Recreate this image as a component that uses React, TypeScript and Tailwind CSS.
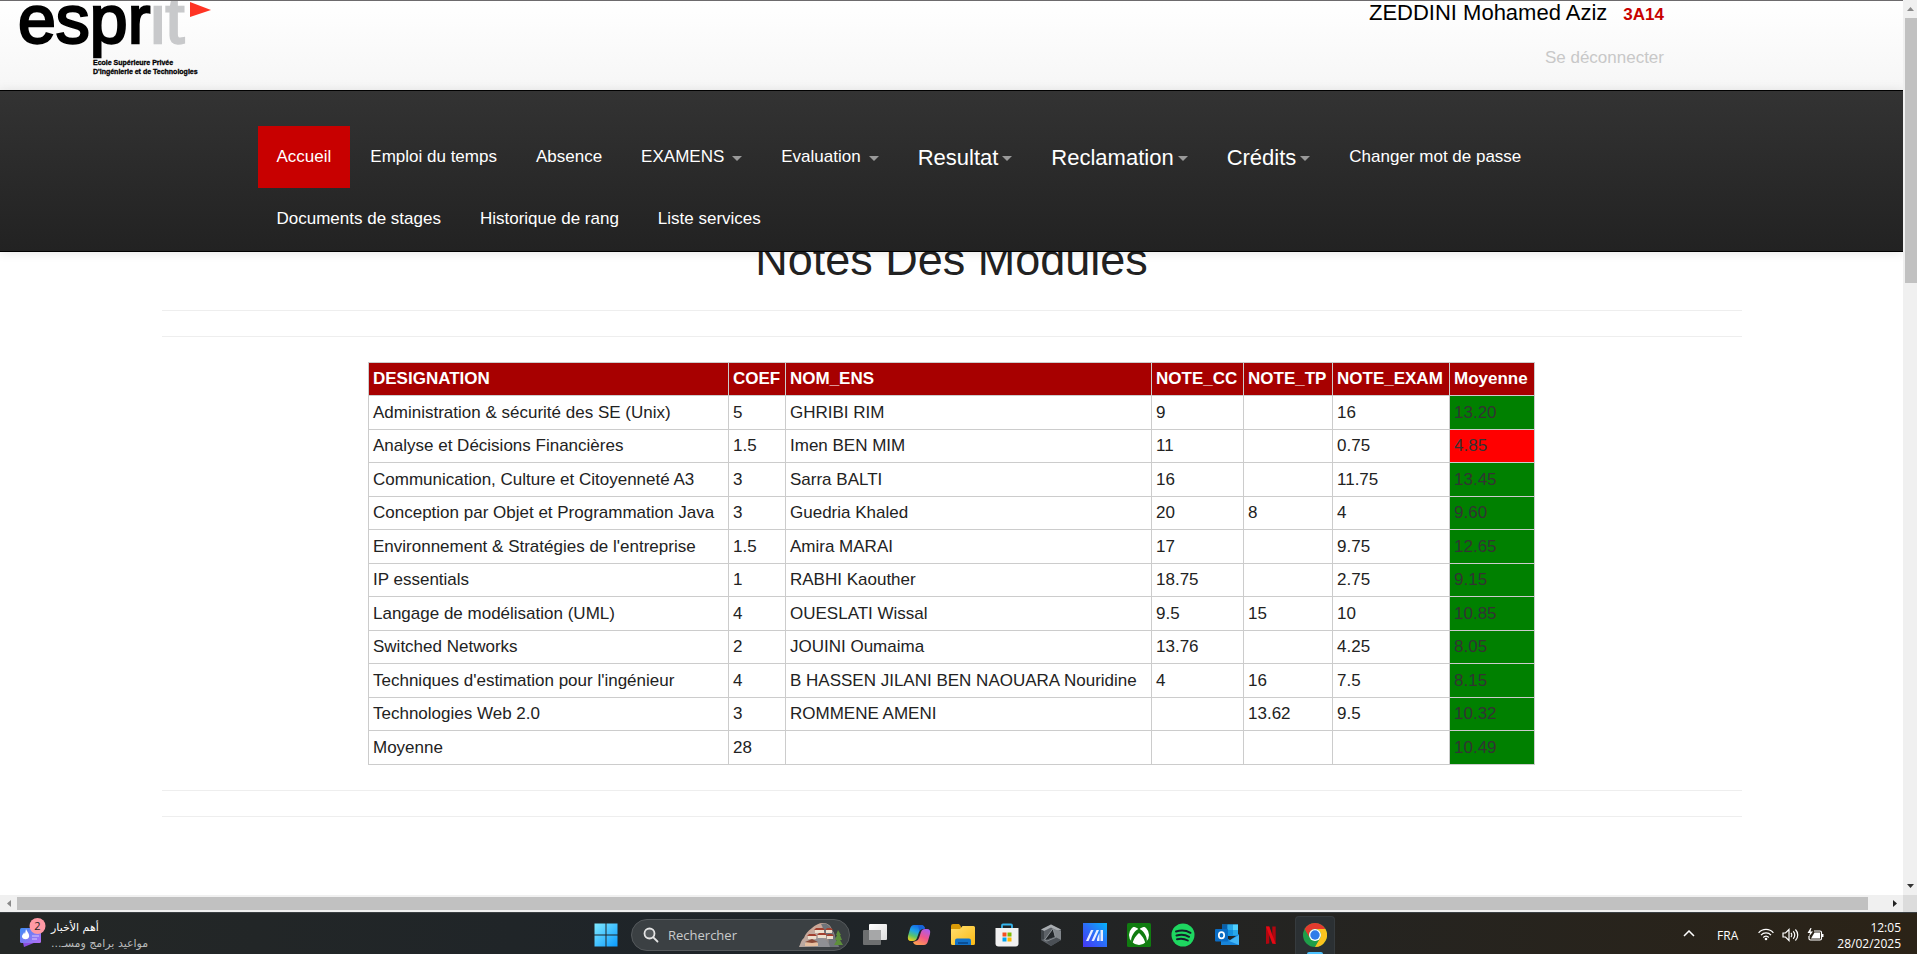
import type { ReactNode } from "react";

const ARIAL = "font-['Liberation_Sans',Arial,sans-serif]";

type NavItem = { label: string; caret?: boolean; large?: boolean; active?: boolean };

const navItems: NavItem[] = [
  { label: "Accueil", active: true },
  { label: "Emploi du temps" },
  { label: "Absence" },
  { label: "EXAMENS", caret: true },
  { label: "Evaluation", caret: true },
  { label: "Resultat", caret: true, large: true },
  { label: "Reclamation", caret: true, large: true },
  { label: "Crédits", caret: true, large: true },
  { label: "Changer mot de passe" },
  { label: "Documents de stages" },
  { label: "Historique de rang" },
  { label: "Liste services" },
];

const columns = [
  { name: "DESIGNATION", width: "w-[360px]" },
  { name: "COEF", width: "w-[57px]" },
  { name: "NOM_ENS", width: "w-[366px]" },
  { name: "NOTE_CC", width: "w-[92px]" },
  { name: "NOTE_TP", width: "w-[89px]" },
  { name: "NOTE_EXAM", width: "w-[117px]" },
  { name: "Moyenne", width: "w-[85px]" },
];

const rows: string[][] = [
  ["Administration & sécurité des SE (Unix)", "5", "GHRIBI RIM", "9", "", "16", "13.20"],
  ["Analyse et Décisions Financières", "1.5", "Imen BEN MIM", "11", "", "0.75", "4.85"],
  ["Communication, Culture et Citoyenneté A3", "3", "Sarra BALTI", "16", "", "11.75", "13.45"],
  ["Conception par Objet et Programmation Java", "3", "Guedria Khaled", "20", "8", "4", "9.60"],
  ["Environnement & Stratégies de l'entreprise", "1.5", "Amira MARAI", "17", "", "9.75", "12.65"],
  ["IP essentials", "1", "RABHI Kaouther", "18.75", "", "2.75", "9.15"],
  ["Langage de modélisation (UML)", "4", "OUESLATI Wissal", "9.5", "15", "10", "10.85"],
  ["Switched Networks", "2", "JOUINI Oumaima", "13.76", "", "4.25", "8.05"],
  ["Techniques d'estimation pour l'ingénieur", "4", "B HASSEN JILANI BEN NAOUARA Nouridine", "4", "16", "7.5", "8.15"],
  ["Technologies Web 2.0", "3", "ROMMENE AMENI", "", "13.62", "9.5", "10.32"],
  ["Moyenne", "28", "", "", "", "", "10.49"],
];

function Logo() {
  return (
    <svg width="230" height="80" viewBox="0 0 230 80" role="img" aria-label="esprit" className="block">
      <g fontFamily="'Liberation Sans', Arial, sans-serif">
        <text x="18" y="42" fontSize="68" fill="#000" stroke="#000" strokeWidth="2.4">
          espr
          <tspan fill="#c8c9cb" stroke="#c8c9cb">it</tspan>
        </text>
        <g fontSize="7" fontWeight="700" fill="#000" stroke="#000" strokeWidth="0.3">
          <text x="93" y="64">Ecole Supérieure Privée</text>
          <text x="93" y="73">D'Ingénierie et de Technologies</text>
        </g>
      </g>
      <path d="M190 1 L211 9 L190 16 Z" fill="#ff3424" />
    </svg>
  );
}

function Header() {
  return (
    <header className="border-t border-[#6d6b6d] bg-linear-to-b from-white to-[#f6f6f6]">
      <div className="flex h-[89px] items-start">
        <Logo />
        <div className="mr-[239px] ml-auto text-right">
          <div className="flex items-baseline justify-end gap-4">
            <span className="text-[22px] leading-[23px] text-black">ZEDDINI Mohamed Aziz</span>
            <span className="text-[17px] leading-[23px] font-bold text-[#c80000]">3A14</span>
          </div>
          <a href="#deconnexion" className="mt-[18px] block text-[17px] leading-7 text-[#c8c8c8]">
            Se déconnecter
          </a>
        </div>
      </div>
    </header>
  );
}

function NavBar() {
  return (
    <nav className="relative z-10 border-y border-black bg-linear-to-b from-[#333] to-[#222] pt-[35px] pb-px shadow-[0_1px_10px_rgba(0,0,0,0.1)]">
      <ul className="mx-auto flex max-w-[1388px] flex-wrap gap-x-px">
        {navItems.map((item) => (
          <li key={item.label}>
            <a
              href="#menu"
              className={`flex h-[62px] items-center px-[19px] text-white ${item.active ? "bg-[#c80000]" : ""} ${
                item.large ? "gap-1 text-[22px]" : "gap-2 text-[17px]"
              }`}
            >
              {item.label}
              {item.caret && (
                <svg width="10" height="5" viewBox="0 0 10 5" className="mt-[3px] block">
                  <path d="M0 0H10L5 5Z" fill="#999" />
                </svg>
              )}
            </a>
          </li>
        ))}
      </ul>
    </nav>
  );
}

function Rules() {
  return (
    <>
      <hr className="border-[#eee]" />
      <hr className="mt-[25px] border-[#eee]" />
    </>
  );
}

function Grades() {
  return (
    <main className="mx-auto max-w-[1580px]">
      <h1 className="-mt-[19px] mb-[23px] text-center text-[45px] leading-[54px] text-[#222]">Notes Des Modules</h1>
      <Rules />
      <table className="mx-auto my-[25px] table-fixed border-collapse text-left text-[17px] leading-6 whitespace-nowrap text-[#222]">
        <thead>
          <tr className="h-[33px] bg-[#a70000] text-white">
            {columns.map((c) => (
              <th key={c.name} scope="col" className={`border border-[#ccc] px-1 py-0 font-bold ${c.width}`}>
                {c.name}
              </th>
            ))}
          </tr>
        </thead>
        <tbody>
          {rows.map((row) => (
            <tr key={row[0]} className="h-[33px] odd:h-[34px]">
              {row.map((cell, i) => (
                <td
                  key={columns[i].name}
                  className={`border border-[#ccc] px-1 py-0 ${
                    i < 6 ? "" : Number(cell) < 8 ? "bg-[#ff0000] text-[#333]" : "bg-[#008000] text-[#333]"
                  }`}
                >
                  {cell}
                </td>
              ))}
            </tr>
          ))}
        </tbody>
      </table>
      <Rules />
    </main>
  );
}

function VerticalScroll() {
  return (
    <div className="flex w-[14px] shrink-0 flex-col bg-[#f0f0f0]">
      <button aria-label="Haut" className="flex h-[18px] items-center justify-center">
        <svg width="7" height="4" viewBox="0 0 7 4">
          <path d="M3.500 0L7 4H0Z" fill="#8a8a8a" />
        </svg>
      </button>
      <div className="ml-[2px] h-[265px] bg-[#c1c1c1]" />
      <button aria-label="Bas" className="mt-auto flex h-[18px] items-center justify-center">
        <svg width="7" height="4" viewBox="0 0 7 4">
          <path d="M0 0H7L3.500 4Z" fill="#333" />
        </svg>
      </button>
    </div>
  );
}

function HorizontalScroll() {
  return (
    <div className="flex h-[17px] shrink-0 bg-[#f0f0f0]">
      <button aria-label="Gauche" className="flex w-[17px] items-center justify-center">
        <svg width="4" height="7" viewBox="0 0 4 7">
          <path d="M4 0V7L0 3.500Z" fill="#8a8a8a" />
        </svg>
      </button>
      <div className="my-[2px] flex-1 bg-[#c1c1c1]" />
      <button aria-label="Droite" className="flex w-[35px] items-center justify-end pr-[6px]">
        <svg width="4" height="7" viewBox="0 0 4 7">
          <path d="M0 0V7L4 3.500Z" fill="#222" />
        </svg>
      </button>
      <div className="w-[14px] bg-[#dcdcdc]" />
    </div>
  );
}

function AppButton({ label, active, children }: { label: string; active?: boolean; children: ReactNode }) {
  return (
    <button
      aria-label={label}
      className={`flex h-[38px] w-11 flex-col items-center ${active ? "px-[2px]" : ""}`}
    >
      <span
        className={`flex h-[38px] w-full items-center justify-center ${
          active ? "rounded-t border border-b-0 border-[#363b3e] bg-[#2b3033]" : ""
        }`}
      >
        <svg width="24" height="24" viewBox="0 0 24 24" className="block">
          {children}
        </svg>
      </span>
      {active && <span className="-mt-[2px] h-[2px] w-4 rounded-t bg-[#4cc2ff]" />}
    </button>
  );
}

function Gradients() {
  return (
    <svg width="0" height="0" className="absolute" aria-hidden="true">
      <defs>
        <linearGradient id="win" x1="0" y1="0" x2="1" y2="1">
          <stop offset="0" stopColor="#7fe9ff" />
          <stop offset="1" stopColor="#0a9bff" />
        </linearGradient>
        <linearGradient id="white" x1="0" y1="0" x2="1" y2="1">
          <stop offset="0" stopColor="#fff" />
          <stop offset="1" stopColor="#ddd" />
        </linearGradient>
        <linearGradient id="copA" x1="0.6" y1="0" x2="0.2" y2="1">
          <stop offset="0" stopColor="#1566e8" />
          <stop offset="0.4" stopColor="#1fa5e8" />
          <stop offset="0.7" stopColor="#5bc467" />
          <stop offset="1" stopColor="#f5cf1a" />
        </linearGradient>
        <linearGradient id="copB" x1="0.8" y1="0" x2="0.3" y2="1">
          <stop offset="0" stopColor="#a95cf0" />
          <stop offset="0.5" stopColor="#f0568b" />
          <stop offset="1" stopColor="#ff9d50" />
        </linearGradient>
        <linearGradient id="folder" x1="0" y1="0" x2="1" y2="1">
          <stop offset="0" stopColor="#ffdf70" />
          <stop offset="1" stopColor="#fbb914" />
        </linearGradient>
        <linearGradient id="asus" x1="0" y1="1" x2="1" y2="0">
          <stop offset="0" stopColor="#4636f4" />
          <stop offset="0.5" stopColor="#2c6cf8" />
          <stop offset="1" stopColor="#04b4fb" />
        </linearGradient>
        <linearGradient id="news" x1="0" y1="0" x2="1" y2="1">
          <stop offset="0" stopColor="#3d8cf5" />
          <stop offset="1" stopColor="#b56cf5" />
        </linearGradient>
        <linearGradient id="rock" x1="0" y1="0" x2="1" y2="1">
          <stop offset="0" stopColor="#e3a78a" />
          <stop offset="0.5" stopColor="#b9a9a2" />
          <stop offset="1" stopColor="#5f6468" />
        </linearGradient>
      </defs>
    </svg>
  );
}

function SearchBox() {
  return (
    <label className="mx-[3px] flex h-8 w-[219px] items-center rounded-full border border-[#55595c] bg-[#3b4043] pr-[6px] pl-[11px]">
      <svg width="16" height="16" viewBox="0 0 16 16" fill="none" stroke="#e4e4e4" strokeWidth="1.800">
        <circle cx="6.500" cy="6.500" r="5" fill="#54595c" />
        <path d="M10.300 10.300L14.500 14.500" strokeLinecap="round" />
      </svg>
      <input
        type="text"
        aria-label="Rechercher"
        placeholder="Rechercher"
        className="ml-[9px] w-0 flex-1 bg-transparent pt-[2px] text-[13px] text-white outline-none placeholder:text-[#c9cbcc]"
      />
      <svg width="44" height="26" viewBox="0 0 44 26">
        <path d="M0 25C2 21 2 18 5 16C6 12 9 9 13 6C16 3 20 1 24 1C29 1 32 4 33 8C36 11 36 15 37 19L40 25Z" fill="url(#rock)" />
        <path d="M22 2C27 0 32 4 33 9C36 13 37 18 40 25H30C31 19 29 15 26 12C24 8 24 5 22 2Z" fill="#6f747a" />
        <path d="M14 20C17 16 20 15 24 16C28 18 30 21 31 25H17Z" fill="#8f9094" />
        <path d="M9 14H17V17H9ZM16 8H25V11H16ZM27 8H33V11H27ZM19 13H27V16H19ZM28 14H34V17H28Z" fill="#ecdfcd" />
        <path d="M8 14L10 12H16L18 14ZM15 8L17 6H24L26 8ZM26 8L28 6H32L34 8ZM18 13L20 11H26L28 13ZM27 14L29 12H33L35 14Z" fill="#a2402f" />
        <path d="M6 21L13 18L19 21V24H6Z" fill="#e6bf9f" />
        <path d="M6 20L13 17L19 20L13 21Z" fill="#8a4a38" />
        <path d="M39 8L42 13H41L43 18H41L44 23H35L38 18H36L38 13H37Z" fill="#5d8f3b" />
      </svg>
    </label>
  );
}

function Taskbar() {
  return (
    <footer className="grid h-[42px] shrink-0 grid-cols-[1fr_auto_1fr] overflow-hidden border-t border-[#3a3f42] bg-linear-to-r from-[#242726] via-[#1e2429] via-40% to-[#2b2317] font-['Open_Sans','Noto_Sans',sans-serif]">
      <Gradients />
      <button className="flex items-start gap-[5px] pt-1 pl-[18px] text-left">
        <svg width="28" height="32" viewBox="0 0 28 32">
          <path d="M3 17L21 12L23 23L6 30Z" fill="#8b4fe0" />
          <rect x="2" y="11" width="21" height="15" rx="1.500" fill="url(#news)" />
          <path d="M8 12C9 15 12 17 11 20C10 23 5 23 4 20C4 17 6 17 6 15L7 17Z" fill="#fff" />
          <path d="M14 19H21M14 22H19" stroke="#d9c9ff" strokeWidth="1.200" />
          <circle cx="19.500" cy="9" r="8" fill="#ff99a4" />
          <text x="19.500" y="13" fontSize="11" textAnchor="middle" fill="#222">
            2
          </text>
        </svg>
        <span dir="rtl" className="flex flex-col items-end pt-[3px] font-['DejaVu_Sans',sans-serif] text-[11px] leading-4 whitespace-nowrap">
          <span className="text-white">أهم الأخبار</span>
          <span className="text-[#b9bbbc]">مواعيد برامج ومسـ...</span>
        </span>
      </button>

      <div className="flex items-center pt-[2px] pl-1">
        <AppButton label="Démarrer">
          <path d="M0.500 0.500H11.500V11.500H0.500ZM12.500 0.500H23.500V11.500H12.500ZM0.500 12.500H11.500V23.500H0.500ZM12.500 12.500H23.500V23.500H12.500Z" fill="url(#win)" />
        </AppButton>
        <SearchBox />
        <AppButton label="Vue des tâches">
          <rect x="6" y="1" width="18" height="16" rx="1" fill="url(#white)" />
          <rect x="0" y="7" width="18" height="15" rx="1" fill="#6d6f70" />
          <rect x="6" y="7" width="12" height="10" fill="#a6a7a8" />
        </AppButton>
        <AppButton label="Copilot">
          <path d="M7 2H14Q17 2 18 5L15 6Q13 6 12 9L10 15Q9 18 6 18H4Q0 18 1 13L3 6Q4 2 7 2Z" fill="url(#copA)" />
          <path d="M17 22H10Q7 22 6 19L9 18Q11 18 12 15L14 9Q15 6 18 6H20Q24 6 23 11L21 18Q20 22 17 22Z" fill="url(#copB)" />
          <path d="M11 2H14Q17 2 18 6H16Q13 6 12.500 9Z" fill="#1763d8" />
        </AppButton>
        <AppButton label="Explorateur de fichiers">
          <path d="M0 3Q0 1 2 1H8L10 3.500V7H0Z" fill="#d99a07" />
          <path d="M0 6H9L11.500 3H22.500Q24 3 24 4.500V20.500Q24 22 22.500 22H1.500Q0 22 0 20.500Z" fill="url(#folder)" />
          <path d="M4 22V17.500Q4 15.500 6 15.500H18Q20 15.500 20 17.500V22Z" fill="#1272c8" />
          <path d="M7 20H17" stroke="#0a4f96" strokeWidth="2" />
        </AppButton>
        <AppButton label="Microsoft Store">
          <path d="M7 7V2.500Q7 1.500 8 1.500H16Q17 1.500 17 2.500V7" fill="none" stroke="#36b5ee" strokeWidth="1.800" />
          <path d="M0.500 5H23.500V20.500Q23.500 23.500 20.500 23.500H3.500Q0.500 23.500 0.500 20.500Z" fill="#f1f1f1" />
          <path d="M7.500 9.500H11.500V13.500H7.500Z" fill="#f25022" />
          <path d="M12.500 9.500H16.500V13.500H12.500Z" fill="#7fba00" />
          <path d="M7.500 14.500H11.500V18.500H7.500Z" fill="#00a4ef" />
          <path d="M12.500 14.500H16.500V18.500H12.500Z" fill="#ffb900" />
        </AppButton>
        <AppButton label="Armoury Crate">
          <path d="M12 1.500L22 6.500V17L12 23L2 17V6.500Z" fill="#5d6268" />
          <path d="M12 1.500L22 6.500L18.500 8L12 4.500L5 8L2 6.500Z" fill="#a9adb1" />
          <path d="M2 6.500L5 8V16L2 17Z" fill="#3f4449" />
          <path d="M14 6L6 17L16 14Z" fill="#22262a" />
          <path d="M14 6L16 14L22 17V8Z" fill="#82878c" />
          <path d="M6 17L16 14L22 17L12 23Z" fill="#4b5056" />
          <path d="M14 5.500L5.500 17L8 18L16.500 14.500Z" fill="none" stroke="#8f9499" strokeWidth="0.900" />
        </AppButton>
        <AppButton label="MyASUS">
          <rect width="24" height="24" fill="url(#asus)" />
          <path d="M3 18L8 7H10.500L5.500 18ZM8.500 18L13.500 7H16L11 18ZM17.500 7H20V18H17.500ZM15 13L16.500 10V18H14V16Z" fill="#e6edff" />
        </AppButton>
        <AppButton label="Xbox">
          <rect width="24" height="24" rx="1.500" fill="#107c10" />
          <circle cx="12" cy="12" r="10" fill="#fff" />
          <path d="M12 6.500C9.500 4.300 7 3.300 5.300 3.800C7.200 2.200 9.500 1.500 12 1.500C14.500 1.500 16.800 2.200 18.700 3.800C17 3.300 14.500 4.300 12 6.500Z" fill="#107c10" />
          <path d="M9 7.500C5.500 11 3.500 15.500 4.300 19L5.700 20.300C6 17 9 12.500 12 10C15 12.500 18 17 18.300 20.300L19.700 19C20.500 15.500 18.500 11 15 7.500L12 5.500Z" fill="#107c10" />
        </AppButton>
        <AppButton label="Spotify">
          <circle cx="12" cy="12" r="11.500" fill="#1ed760" />
          <path d="M5 8.500C10 7 15.500 7.500 19.500 9.800M5.500 12.500C10 11.200 14.500 11.700 18 13.800M6 16.200C10 15.200 13.500 15.600 16.800 17.500" fill="none" stroke="#14202a" strokeWidth="2" strokeLinecap="round" />
        </AppButton>
        <AppButton label="Outlook">
          <path d="M7 1.500H23V13H7Z" fill="#1490df" />
          <path d="M7 1.500H12.500V7H7Z" fill="#0a5fa8" />
          <path d="M12.500 1.500H18V7H12.500ZM18 7H23V12H18Z" fill="#28a8ea" />
          <path d="M18 1.500H23V7H18Z" fill="#50d0ff" />
          <path d="M6 12L15 17L24 11V22H6Z" fill="#1784d9" />
          <path d="M24 22V12L14 18Z" fill="#42b5f5" />
          <rect x="0" y="6" width="13" height="12.500" rx="1" fill="#0a6cc4" />
          <ellipse cx="6.500" cy="12.200" rx="2.700" ry="3.100" fill="none" stroke="#fff" strokeWidth="1.700" />
        </AppButton>
        <AppButton label="Netflix">
          <path d="M7 3.500H10.300V20.500L7 21Z" fill="#b1060f" />
          <path d="M13.300 3.500H16.700V21L13.300 20.500Z" fill="#b1060f" />
          <path d="M7 3.500H10.300L16.700 21L13.300 20.500Z" fill="#e50914" />
        </AppButton>
        <AppButton label="Chrome" active>
          <circle cx="12" cy="12" r="12" fill="#1e9e49" />
          <path d="M1.600 6A12 12 0 0 1 22.400 6H12A6 6 0 0 0 6.800 15Z" fill="#e33b2e" />
          <path d="M22.400 6A12 12 0 0 1 12 24L17.200 15A6 6 0 0 0 12 6Z" fill="#fcc31e" />
          <circle cx="12" cy="12" r="6" fill="#fff" />
          <circle cx="12" cy="12" r="4.700" fill="#2f7de9" />
        </AppButton>
      </div>

      <div className="flex items-center justify-end pr-4 text-[12px] text-white">
        <button aria-label="Icônes cachées" className="mr-[22px]">
          <svg width="12" height="7" viewBox="0 0 12 7" fill="none" stroke="#fff" strokeWidth="1.500">
            <path d="M1 6L6 1L11 6" />
          </svg>
        </button>
        <span className="mr-5 pt-1">FRA</span>
        <button aria-label="Réseau, son et batterie" className="mr-[13px] flex items-center gap-2 pt-[2px]">
          <svg width="16" height="13" viewBox="0 0 16 13" fill="none" stroke="#fff" strokeWidth="1.200">
            <path d="M0.600 4.800C4.500 0.200 11.500 0.200 15.400 4.800M3 7.200C5.500 4.200 10.500 4.200 13 7.200M5.300 9.500C6.800 7.700 9.200 7.700 10.700 9.500" />
            <circle cx="8" cy="11" r="1.300" fill="#fff" stroke="none" />
          </svg>
          <svg width="17" height="14" viewBox="0 0 17 14" fill="none" stroke="#fff" strokeWidth="1.200">
            <path d="M1 5H3.500L7 1.500V12.500L3.500 9H1ZM9 5C10 6 10 8 9 9M11.200 3.200C13.300 5.200 13.300 8.800 11.200 10.800M13.400 1.500C16.500 4.500 16.500 9.500 13.400 12.500" />
          </svg>
          <svg width="17" height="14" viewBox="0 0 17 14" fill="none" stroke="#fff" strokeWidth="1.200">
            <path d="M7 3H13Q14.500 3 14.500 4.500V10.500Q14.500 12 13 12H3.500Q2 12 2 10.500V8" />
            <path d="M7.500 4.500H13V10.500H4Z" fill="#fff" stroke="none" />
            <path d="M15.500 6V9" strokeWidth="2" />
            <path d="M3.500 0L0.500 5H3L2 8.500L6 3.500H3.500L4.500 0Z" fill="#fff" stroke="none" />
          </svg>
        </button>
        <div className="pt-1 text-right leading-4">
          <div>12:05</div>
          <div>28/02/2025</div>
        </div>
      </div>
    </footer>
  );
}

export default function App() {
  return (
    <div className={`flex h-screen flex-col bg-white ${ARIAL}`}>
      <div className="flex min-h-0 flex-1">
        <div className="min-w-0 flex-1 overflow-hidden">
          <Header />
          <NavBar />
          <Grades />
        </div>
        <VerticalScroll />
      </div>
      <HorizontalScroll />
      <Taskbar />
    </div>
  );
}
